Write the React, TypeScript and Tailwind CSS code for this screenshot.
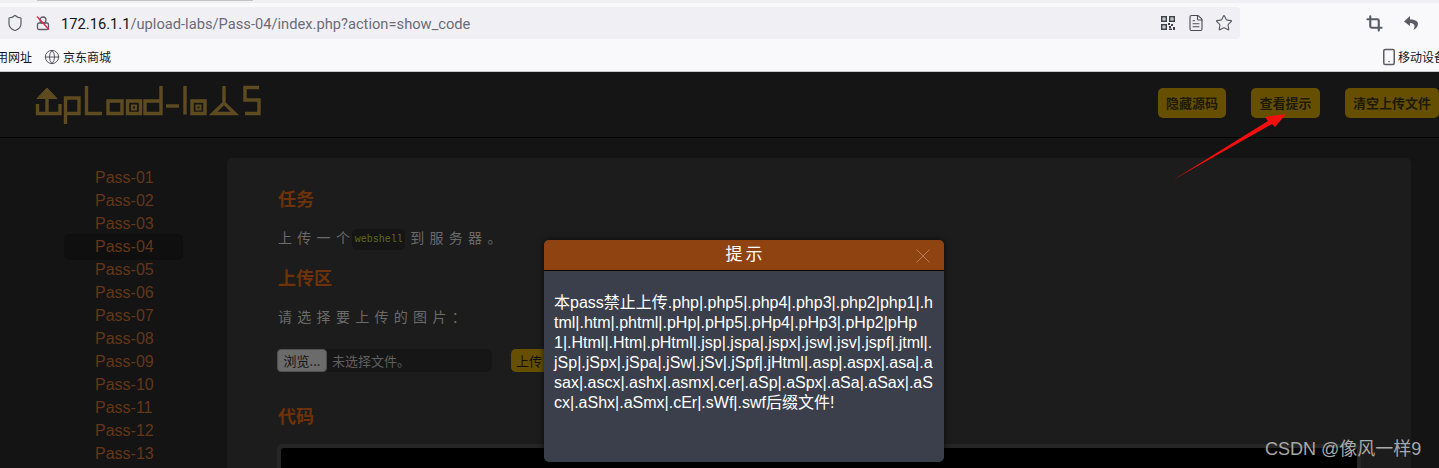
import { Crop, FileText, Globe, Shield, Smartphone, Star } from "lucide-react";

const PASSES = ["01", "02", "03", "04", "05", "06", "07", "08", "09", "10", "11", "12", "13"];

const HINT_LINES = [
  "本pass禁止上传.php|.php5|.php4|.php3|.php2|php1|.h",
  "tml|.htm|.phtml|.pHp|.pHp5|.pHp4|.pHp3|.pHp2|pHp",
  "1|.Html|.Htm|.pHtml|.jsp|.jspa|.jspx|.jsw|.jsv|.jspf|.jtml|.",
  "jSp|.jSpx|.jSpa|.jSw|.jSv|.jSpf|.jHtml|.asp|.aspx|.asa|.a",
  "sax|.ascx|.ashx|.asmx|.cer|.aSp|.aSpx|.aSa|.aSax|.aS",
  "cx|.aShx|.aSmx|.cEr|.sWf|.swf后缀文件!",
];

const SANS = "font-['Liberation_Sans','Noto_Sans_CJK_SC',sans-serif]";

function Logo() {
  return (
    <svg width="234" height="46" viewBox="33 82 234 46" fill="none" stroke="#5f4b20" strokeWidth="3.4">
      {/* up arrow + u */}
      <path d="M37 98.5 L47 88 L57 98.5 Z" fill="#5f4b20" strokeWidth="1" />
      <path d="M47 92 V113.5 M37.5 104 V113.5 H60 V104" />
      {/* p */}
      <path d="M65.5 124 V98 H79 V113.5 H65.5" />
      {/* L */}
      <path d="M86.5 86 V113.5 H102" />
      {/* o o */}
      <path d="M108 101 H122 V113.5 H108 Z" />
      <path d="M127.5 101 H140.5 V113.5 H127.5 Z" />
      <rect x="132" y="105.5" width="4" height="4" strokeWidth="2" />
      {/* d */}
      <path d="M161 86 V113.5 H145 V101 H161" />
      {/* dash */}
      <path d="M166 106 H179" />
      {/* l */}
      <path d="M185 86 V114.5" />
      {/* o */}
      <path d="M192 101 H205 V113.5 H192 Z" />
      <rect x="196.5" y="105.5" width="4" height="4" strokeWidth="2" />
      {/* A */}
      <path d="M224 86 V103 M224 103 L213 113.5 H235 Z" />
      {/* S */}
      <path d="M259 87.5 H245 V100 H259 V113.5 H245" />
    </svg>
  );
}

function BrowserBar() {
  return (
    <div className="h-[72px] shrink-0 bg-[#f9f9fb] border-b border-[#c8c8c8] text-[#15141a]">
      <div className="h-[3px] bg-[#f0f0f4] overflow-hidden">
        <div className="ml-[37px] w-[216px] h-[1px] bg-[#c4c4c4]" />
      </div>
      <div className="flex items-center pt-1">
        <div className="flex items-center w-[1240px] h-8 bg-[#f0f0f4] rounded-r-[4px] pl-[6px] pr-[7px]">
          <Shield size={18} strokeWidth={1.6} className="text-[#5b5b66]" />
          <svg width="16" height="16" viewBox="0 0 16 16" fill="none" className="ml-[11px]">
            <circle cx="8" cy="5" r="3" stroke="#5b5b66" strokeWidth="1.3" />
            <rect x="2.5" y="8" width="11" height="6.5" rx="1.5" stroke="#5b5b66" strokeWidth="1.3" />
            <path d="M2 1.5 L14 14.5" stroke="#e22850" strokeWidth="1.4" />
          </svg>
          <div className="ml-[10px] pt-[2px] text-[14.7px] font-['Roboto',sans-serif] text-[#6b6b75] whitespace-nowrap">
            <span className="text-[#15141a]">172.16.1.1</span>/upload-labs/Pass-04/index.php?action=show_code
          </div>
          <svg width="14" height="14" viewBox="0 0 14 14" fill="#3f3f47" className="ml-auto mr-[12px]">
            <path fillRule="evenodd" d="M0 0H6V6H0ZM1.5 1.5V4.5H4.5V1.5ZM8 0H14V6H8ZM9.500 1.500V4.500H12.500V1.500ZM0 8H6V14H0ZM1.500 9.500V12.500H4.500V9.500Z" />
            <path d="M2.500 2.500H3.500V3.500H2.500ZM10.500 2.500H11.500V3.500H10.500ZM2.500 10.500H3.500V11.500H2.500ZM7 7H9V9H7ZM10 8H12V10H10ZM8 10H10V12H8ZM12 11H14V14H12ZM8 12.500H11V14H8Z" />
          </svg>
          <FileText size={18} strokeWidth={1.5} className="text-[#4c4c55] mr-[10px]" />
          <Star size={18} strokeWidth={1.5} className="text-[#5b5b66]" />
        </div>
        <Crop size={17} strokeWidth={3} className="ml-[126px] text-[#5b5b66]" />
        <svg width="16" height="16" viewBox="0 0 16 16" fill="#5b5b66" className="ml-[20px]">
          <path d="M7 1 L1 6.500 L7 11 V8 C10 8 11.500 9.500 11.500 11 C11.500 12.500 11 14 10 15 C13 14 15 11.500 15 9 C15 6 12 4.500 7 4.500 Z" />
        </svg>
      </div>
      <div className="flex items-center h-[25px] mt-[5px] text-[12px] font-['Noto_Sans_CJK_SC',sans-serif] overflow-hidden">
        <span className="-ml-[16px] whitespace-nowrap">常用网址</span>
        <Globe size={16} strokeWidth={1.4} className="ml-[12px] text-[#4c4c55]" />
        <span className="ml-[3px]">京东商城</span>
        <Smartphone size={18} strokeWidth={2} className="ml-auto text-[#5b5b66] shrink-0" />
        <span className="w-[41px] shrink-0 whitespace-nowrap overflow-hidden">移动设备</span>
      </div>
    </div>
  );
}

function Header() {
  return (
    <div className="h-[66px] shrink-0 bg-[#151515] border-b border-black flex items-center pl-[33px]">
      <Logo />
      <div className="ml-[891px] w-[281px] flex justify-between -mt-[3px] text-[13px] font-bold text-[#1e1a08] font-['Noto_Sans_CJK_SC',sans-serif]">
        <span className="h-[30px] px-2 flex items-center rounded-[5px] bg-[#665000] whitespace-nowrap">隐藏源码</span>
        <span className="h-[30px] px-2 flex items-center rounded-[5px] bg-[#665000] whitespace-nowrap">查看提示</span>
        <span className="h-[30px] px-2 flex items-center rounded-[5px] bg-[#665000] whitespace-nowrap">清空上传文件</span>
      </div>
    </div>
  );
}

function Sidebar() {
  return (
    <ul className={`w-[227px] shrink-0 pt-[8px] pl-[64px] pr-[44px] text-[16px] text-[#633718] ${SANS}`}>
      {PASSES.map((p) =>
        p === "04" ? (
          <li key={p} className="h-[26px] -my-[1.5px] pl-[31px] flex items-center rounded-[5px] bg-[#0f0f0f]">
            Pass-{p}
          </li>
        ) : (
          <li key={p} className="h-[23px] pl-[31px] flex items-center">
            Pass-{p}
          </li>
        )
      )}
    </ul>
  );
}

function Content() {
  const heading = "text-[18px] leading-[26px] font-bold text-[#6f3208] font-['Noto_Sans_CJK_SC',sans-serif]";
  const body = "text-[14px] leading-[21px] tracking-[5.3px] text-[#6a6a6a] font-['Noto_Sans_CJK_SC',sans-serif]";
  return (
    <div className="w-[1184px] shrink-0 bg-[#1c1c1c] rounded-t-[5px] pt-[27px] pl-[51px] pr-[50px]">
      <h2 className={heading}>任务</h2>
      <p className={`${body} mt-[16px] flex items-center`}>
        上传一个
        <code className="h-[21px] w-[53px] mt-[2px] -mb-[2px] -ml-[3px] mr-[5px] flex items-center justify-center rounded-[5px] bg-[#151515] text-[10px] tracking-normal text-[#5f6b1a] font-['Liberation_Mono',monospace]">
          webshell
        </code>
        到服务器。
      </p>
      <h2 className={`${heading} mt-[16px]`}>上传区</h2>
      <p className={`${body} mt-[16px]`}>请选择要上传的图片：</p>
      <div className="mt-[22px] flex items-center -ml-[1px]">
        <div className="w-[215px] h-[23px] flex items-center rounded-[5px] bg-[#161616] text-[13px] text-[#5f5f5f] font-['Noto_Sans_CJK_SC',sans-serif]">
          <span className="w-[50px] h-[23px] flex items-center justify-center rounded-[4px] bg-[#6b6b6b] border border-[#505050] text-[#141414]">
            浏览...
          </span>
          <span className="ml-[5px]">未选择文件。</span>
        </div>
        <span className="ml-[19px] w-[50px] h-[23px] pl-[5px] flex items-center rounded-[5px] bg-[#665000] text-[13px] text-[#111] font-['Noto_Sans_CJK_SC',sans-serif]">
          上传
        </span>
      </div>
      <h2 className={`${heading} mt-[30px]`}>代码</h2>
      <div className="mt-[16px] -ml-[1px] p-1 bg-[#262626] rounded-[5px] w-[1084px]">
        <div className="h-[60px] bg-black rounded-[3px]" />
      </div>
    </div>
  );
}

function HintDialog() {
  return (
    <div className={`absolute left-[544px] top-[240px] w-[400px] h-[222px] rounded-[5px] overflow-hidden bg-[#3a3f4b] shadow-[0_0_6px_rgba(0,0,0,0.7)] ${SANS}`}>
      <div className="relative h-[31px] pl-[3px] bg-[#8f4310] border-b border-black flex items-center justify-center text-[17px] tracking-[3px] text-white">
        提示
        <svg width="14" height="14" viewBox="0 0 14 14" stroke="#b87c58" strokeWidth="1" className="absolute right-[14px] top-[9px]">
          <path d="M0.500 0.500 L13.500 13.500 M13.500 0.500 L0.500 13.500" />
        </svg>
      </div>
      <div className="px-[10px] pt-[22px] text-[16px] leading-[20px] text-white whitespace-nowrap">
        {HINT_LINES.map((line) => (
          <p key={line}>{line}</p>
        ))}
      </div>
    </div>
  );
}

export default function App() {
  return (
    <div className="relative w-[1439px] h-[468px] overflow-hidden bg-[#141414] flex flex-col">
      <BrowserBar />
      <Header />
      <div className="flex pt-5">
        <Sidebar />
        <Content />
      </div>
      <HintDialog />
      {/* red annotation arrow */}
      <svg width="1439" height="468" className="absolute left-0 top-0 pointer-events-none">
        <path d="M1173 180 L1268 121 L1265 117 L1286 114 L1275 127 L1272 124 Z" fill="#f40f0f" />
      </svg>
      <div className="absolute left-[1265px] top-[437px] text-[18px] leading-6 text-[#a8a8a8] whitespace-nowrap font-['Liberation_Sans','Noto_Sans_CJK_SC',sans-serif]">
        CSDN @像风一样9
      </div>
    </div>
  );
}
